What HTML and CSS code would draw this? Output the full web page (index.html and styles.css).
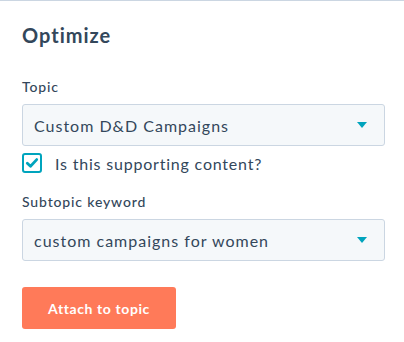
FILE: index.html
```html
<!DOCTYPE html>
<html lang="en">
<head>
    <meta charset="UTF-8">
    <meta name="viewport" content="width=device-width, initial-scale=1.0">
    <title>Optimize</title>
    <link rel="stylesheet" href="styles.css">
</head>
<body>
    <div class="panel">
        <h2 class="title">Optimize</h2>

        <label class="field-label">Topic</label>
        <div class="select">
            <span class="select-value">Custom D&amp;D Campaigns</span>
            <span class="caret"></span>
        </div>

        <label class="check-row">
            <span class="checkbox">
                <svg width="14" height="14" viewBox="0 0 14 14"><path d="M2.3 7.2 L5.5 10.3 L11.7 3.6" fill="none" stroke="#00a4bd" stroke-width="2.8" stroke-linecap="round" stroke-linejoin="round"/></svg>
            </span>
            <span class="check-text">Is this supporting content?</span>
        </label>

        <label class="field-label sub">Subtopic keyword</label>
        <div class="select">
            <span class="select-value">custom campaigns for women</span>
            <span class="caret"></span>
        </div>

        <button class="btn-primary">Attach to topic</button>
    </div>
</body>
</html>
```

FILE: styles.css
```css
body { margin: 0; background: #fff; font-family: Lato, "Open Sans", sans-serif; color: #33475b; }
.panel { border-top: 1px solid #cbd6e2; padding: 0 19px 0 22px; height: 341px; }
.title { font-size: 20px; font-weight: 700; line-height: 24px; margin: 22px 0 0; letter-spacing: 1px; }
.field-label { display: block; font-size: 14px; font-weight: 500; line-height: 18px; margin-top: 31px; letter-spacing: 0.85px; }
.field-label.sub { margin-top: 20px; }
.select { display: flex; align-items: center; justify-content: space-between; height: 40px; margin-top: 8px; padding: 0 17px 0 11px; background: #f5f8fa; border: 1px solid #cbd6e2; border-radius: 3px; font-size: 16px; letter-spacing: 1px; }
.caret { width: 0; height: 0; border-left: 5.5px solid transparent; border-right: 5.5px solid transparent; border-top: 6px solid #00a4bd; }
.check-row { display: flex; align-items: center; gap: 13px; margin-top: 7px; font-size: 16px; letter-spacing: 0.8px; }
.checkbox { display: flex; align-items: center; justify-content: center; width: 16px; height: 16px; border: 2px solid #00a4bd; border-radius: 3px; }
.btn-primary { display: block; margin-top: 26px; width: 154px; height: 42px; background: #ff7a59; color: #fff; border: none; border-radius: 3px; font-family: Lato, sans-serif; font-size: 14px; font-weight: 700; letter-spacing: 0.6px; }
```
